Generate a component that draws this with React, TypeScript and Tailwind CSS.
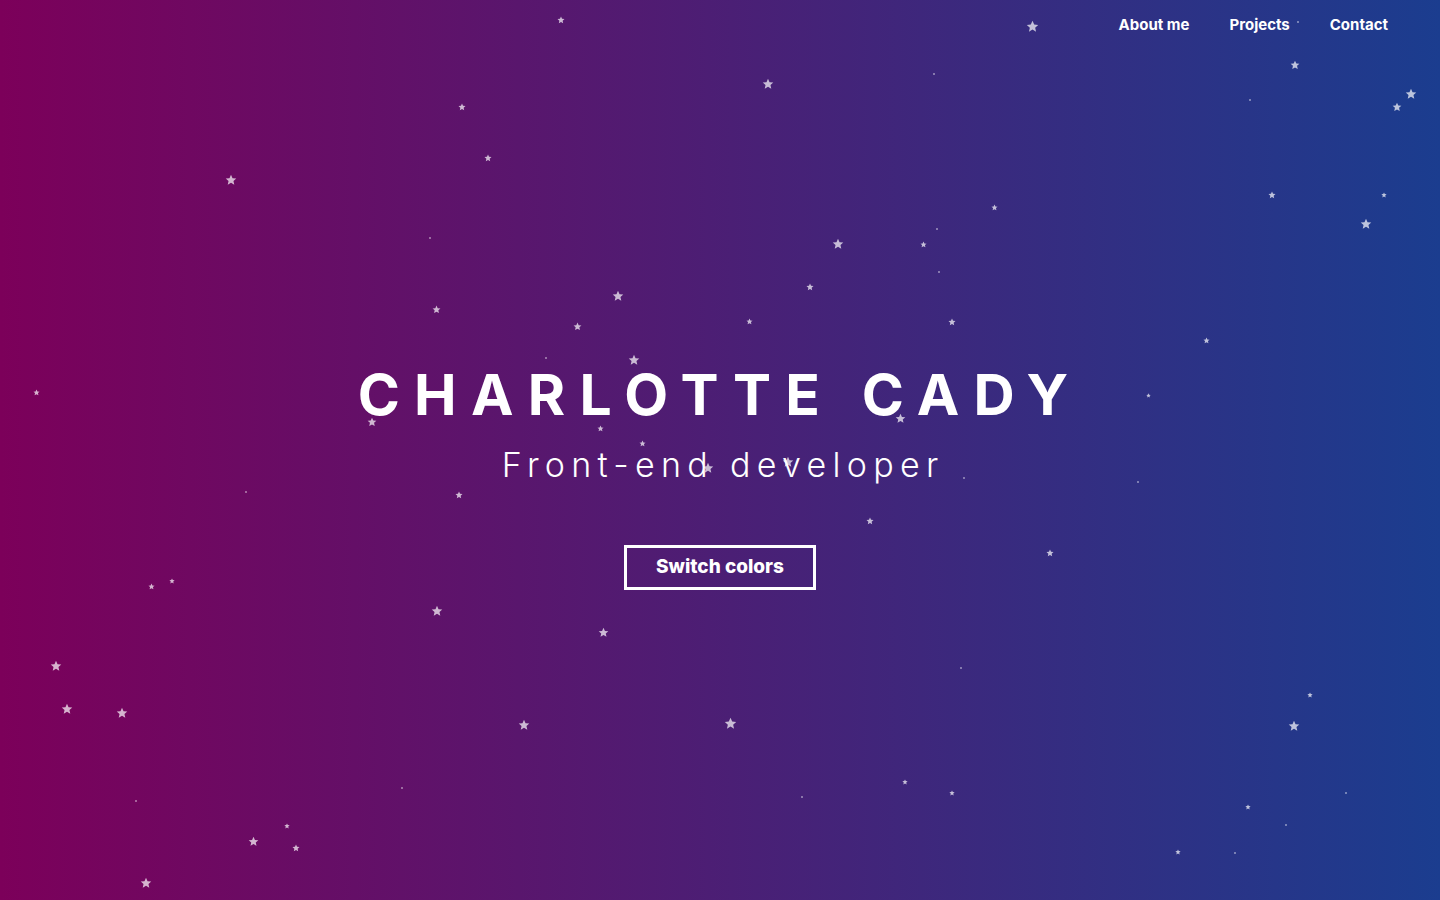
type Star = [number, number, number];

// [x, y, size] - size 0 means a tiny dot
const stars: Star[] = [
  [1032, 26, 13], [768, 84, 12], [231, 180, 12], [838, 244, 12], [618, 296, 12],
  [634, 360, 12], [1366, 224, 12], [1411, 94, 12], [1397, 107, 10], [1295, 65, 10],
  [437, 611, 12], [56, 666, 12], [67, 709, 12], [122, 713, 12], [146, 883, 12],
  [524, 725, 12], [730, 723, 13], [1294, 726, 12], [603, 632, 11], [253, 841, 11],
  [900, 418, 11], [372, 422, 10], [708, 468, 12], [788, 462, 12],
  [561, 20, 8], [462, 107, 8], [488, 158, 8], [994, 207, 7], [923, 244, 7],
  [810, 287, 8], [749, 321, 7], [952, 322, 8], [436, 309, 9], [577, 326, 9],
  [1272, 195, 8], [1384, 195, 6], [1206, 340, 7], [36, 392, 7], [600, 428, 7],
  [642, 443, 7], [459, 495, 8], [870, 521, 8], [1050, 553, 8], [151, 586, 7],
  [172, 581, 6], [1310, 695, 6], [905, 782, 6], [952, 793, 6], [1248, 807, 6],
  [1178, 852, 6], [287, 826, 6], [296, 848, 8], [1148, 395, 5],
  [546, 358, 0], [934, 74, 0], [1250, 100, 0], [937, 229, 0], [939, 272, 0],
  [1138, 482, 0], [964, 478, 0], [246, 492, 0], [402, 788, 0], [136, 801, 0],
  [1235, 853, 0], [1286, 825, 0], [1346, 793, 0], [802, 797, 0], [961, 668, 0],
  [1298, 22, 0], [430, 238, 0],
];

function StarIcon({ x, y, size }: { x: number; y: number; size: number }) {
  if (size === 0) {
    return (
      <span
        className="absolute h-[2px] w-[2px] rounded-full bg-white/50"
        style={{ left: x - 1, top: y - 1 }}
      />
    );
  }
  return (
    <svg
      className="absolute fill-white/70"
      style={{ left: x - size / 2, top: y - size / 2, width: size, height: size }}
      viewBox="0 0 24 24"
    >
      <path d="M12 1.5l3.09 6.96 7.41.68-5.6 4.94 1.66 7.42L12 17.7l-6.56 3.8 1.66-7.42-5.6-4.94 7.41-.68z" />
    </svg>
  );
}

export default function App() {
  return (
    <div className="relative h-[900px] w-full overflow-hidden bg-[linear-gradient(to_right,#7c005a,#1b3d8f)] font-['Inter',sans-serif] text-white">
      {stars.map(([x, y, s], i) => (
        <StarIcon key={i} x={x} y={y} size={s} />
      ))}

      <nav className="relative flex justify-end gap-10 pr-[52px] pt-[14px] text-[15px] font-bold">
        <a className="cursor-pointer">About me</a>
        <a className="cursor-pointer">Projects</a>
        <a className="cursor-pointer">Contact</a>
      </nav>

      <main className="relative flex flex-col items-center pt-[329px]">
        <h1 className="text-[57px] font-bold leading-none tracking-[0.25em]">
          CHARLOTTE CADY
        </h1>
        <p className="mt-[25px] pl-[0.185em] text-[34px] font-light leading-none tracking-[0.185em]">
          Front-end developer
        </p>
        <button className="mt-[63px] h-[45px] w-[192px] border-[3px] border-white text-[19px] font-extrabold">
          Switch colors
        </button>
      </main>
    </div>
  );
}
